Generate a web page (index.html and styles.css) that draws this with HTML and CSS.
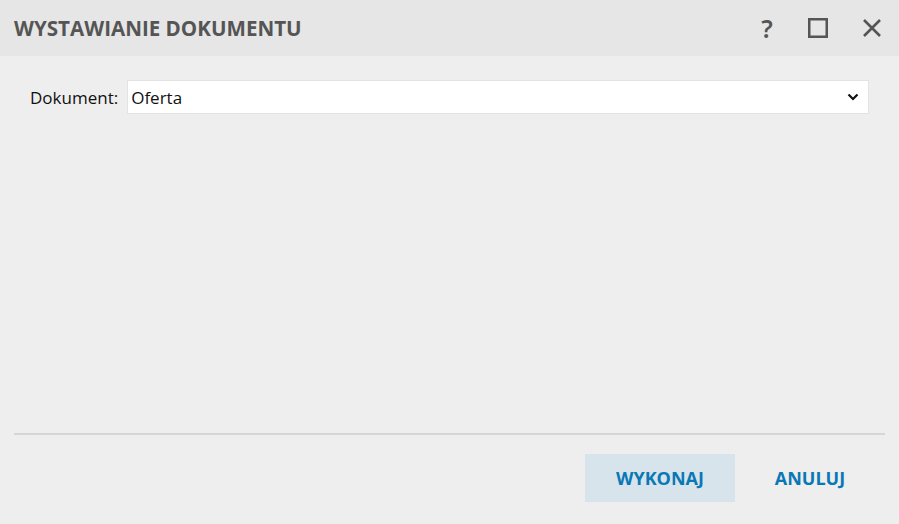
FILE: index.html
```html
<!DOCTYPE html>
<html lang="pl">
<head>
<meta charset="utf-8">
<title>Wystawianie dokumentu</title>
<link rel="stylesheet" href="styles.css">
</head>
<body>
<div class="dialog">
  <header class="titlebar">
    <h1 class="title">WYSTAWIANIE DOKUMENTU</h1>
    <div class="controls">
      <span class="ctl help">?</span>
      <span class="ctl">
        <svg width="20" height="20" viewBox="0 0 20 20"><rect x="1.25" y="1.25" width="17.5" height="17.5" fill="none" stroke="#555" stroke-width="2.5"/></svg>
      </span>
      <span class="ctl">
        <svg width="20" height="20" viewBox="0 0 20 20"><path d="M2 2 L18 18 M18 2 L2 18" stroke="#555" stroke-width="2.6" fill="none"/></svg>
      </span>
    </div>
  </header>
  <main class="content">
    <div class="field">
      <label class="label">Dokument:</label>
      <div class="select">
        <span class="value">Oferta</span>
        <svg class="chev" width="12" height="8" viewBox="0 0 12 8"><path d="M1.5 1.5 L6 6 L10.5 1.5" stroke="#111" stroke-width="2.2" fill="none"/></svg>
      </div>
    </div>
  </main>
  <footer class="footer">
    <button class="btn primary">WYKONAJ</button>
    <button class="btn">ANULUJ</button>
  </footer>
</div>
</body>
</html>
```
FILE: styles.css
```css
html, body {
  margin: 0;
  padding: 0;
  height: 100%;
}
body {
  background: #eeeeee;
  font-family: "Open Sans", "Noto Sans", sans-serif;
  color: #111;
}
.dialog {
  display: flex;
  flex-direction: column;
  height: 524px;
}
.titlebar {
  height: 56px;
  background: #e6e6e6;
  display: flex;
  align-items: center;
  justify-content: space-between;
  padding: 0 0 0 14px;
  box-sizing: border-box;
}
.title {
  margin: 0;
  font-size: 20.6px;
  font-weight: 700;
  color: #555555;
  letter-spacing: 0;
}
.controls {
  display: flex;
  align-items: center;
}
.ctl {
  width: 54px;
  display: flex;
  justify-content: center;
  align-items: center;
  height: 24px;
}
.help {
  font-size: 25px;
  font-weight: 600;
  color: #555;
  font-family: "Noto Sans", sans-serif;
  line-height: 24px;
  padding-left: 6px;
  box-sizing: border-box;
}
.content {
  flex: 1;
  padding: 24px 30px 0 30px;
}
.field {
  display: flex;
  align-items: center;
  gap: 9px;
}
.label {
  font-size: 17px;
}
.select {
  flex: 1;
  height: 34px;
  box-sizing: border-box;
  background: #fff;
  border: 1px solid #e3e3e3;
  display: flex;
  align-items: center;
  justify-content: space-between;
  padding: 0 9px 0 3px;
  font-size: 17px;
}
.footer {
  margin: 0 14px;
  border-top: 2px solid #d6d6d6;
  height: 91px;
  box-sizing: border-box;
  display: flex;
  justify-content: flex-end;
  align-items: flex-start;
  padding-top: 19px;
}
.btn {
  font-family: "Open Sans", "Noto Sans", sans-serif;
  font-size: 18px;
  font-weight: 700;
  color: #0a78b4;
  background: transparent;
  border: 0;
  height: 48px;
  width: 150px;
  padding: 0;
  cursor: pointer;
}
.btn.primary {
  background: #d7e4ec;
}
```
